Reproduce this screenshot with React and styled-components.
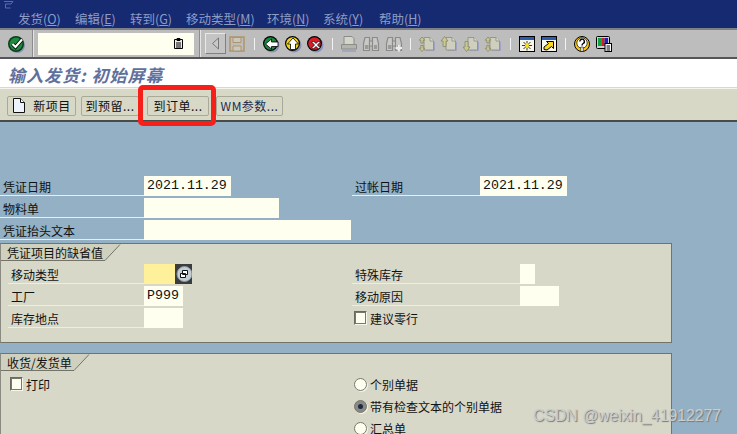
import React from 'react';
import styled, { createGlobalStyle } from 'styled-components';

const Global = createGlobalStyle`
  html, body { margin: 0; padding: 0; background: #94b0c4; }
`;

const cjk = `"Noto Sans CJK SC", "Liberation Sans", sans-serif`;

const Page = styled.div`
  position: relative;
  width: 737px;
  height: 434px;
  overflow: hidden;
  background: #94b0c4;
  font-family: ${cjk};
  font-size: 12px;
  color: #111;
`;

const TitleBar = styled.div`
  height: 28px;
  box-sizing: border-box;
  background: #162a72;
  display: flex;
  flex-direction: column;
  justify-content: space-between;
  padding: 1px 0 0 3px;
`;

const Menu = styled.div`
  display: flex;
  padding-left: 15px;
  height: 19px;
  line-height: 19px;
  font-size: 12.5px;
`;

const MenuItem = styled.span`
  width: ${p => p.$w}px;
  color: #8d9cc4;
  white-space: nowrap;
  u { text-underline-offset: 1px; }
`;

const Toolbar = styled.div`
  height: 31px;
  box-sizing: border-box;
  background: #bdbdbd;
  border-top: 2px solid #7d7f86;
  border-bottom: 2px solid #55565a;
  display: flex;
  align-items: center;
  padding-left: 8px;
`;

const Tool = styled.span`
  display: inline-flex;
  width: 16px;
  height: 16px;
  margin-left: ${p => p.$ml || 0}px;
  flex: none;
  svg { overflow: visible; }
`;

const Sep = styled.span`
  width: 1px;
  height: 12px;
  background: #f2f2f2;
  flex: none;
  margin-left: ${p => p.$ml}px;
`;

const TallSep = styled.span`
  width: 1px;
  height: 27px;
  flex: none;
  background: #8c8c8c;
  border-right: 1px solid #e4e4e4;
  margin-left: ${p => p.$ml}px;
`;

const Command = styled.div`
  width: 156px;
  height: 22px;
  margin-left: 4px;
  flex: none;
  box-sizing: border-box;
  background: #fffff0;
  display: flex;
  align-items: center;
  justify-content: flex-end;
  padding-right: 11px;
`;

const BackBox = styled.span`
  display: inline-flex;
  align-items: center;
  justify-content: center;
  width: 21px;
  height: 21px;
  margin-left: 4px;
  flex: none;
  background: #c4c4c4;
  border: 1px solid;
  box-sizing: border-box;
  border-color: #e8e8e8 #808080 #808080 #e8e8e8;
`;

const TitleRow = styled.div`
  height: 29px;
  box-sizing: border-box;
  background: #fff;
  border-bottom: 1px solid #d8d8d0;
  padding-left: 8px;
  line-height: 32px;
  font-size: 17px;
  font-weight: 700;
  font-style: italic;
  letter-spacing: 1px;
  color: #60709c;
`;

const AppBar = styled.div`
  height: 34px;
  box-sizing: border-box;
  background: #d8d8c6;
  border-top: 1px solid #f4f4ec;
  border-bottom: 2px solid #4a4a48;
  display: flex;
  padding: 7px 0 0 7px;
`;

const Btn = styled.div`
  height: 20px;
  width: ${p => p.$w}px;
  margin-right: ${p => p.$mr}px;
  flex: none;
  box-sizing: border-box;
  border: 1px solid #a9a998;
  border-radius: 2px;
  display: flex;
  align-items: center;
  justify-content: center;
  gap: 7px;
  white-space: nowrap;
  color: ${p => p.$color || '#111'};
  line-height: 18px;
  letter-spacing: 0.5px;
`;

const Body = styled.div`
  padding-top: 54px;
`;

const Columns = styled.div`
  display: flex;
`;

const Col = styled.div`
  width: ${p => p.$w}px;
  flex: none;
  box-sizing: border-box;
  display: flex;
  flex-direction: column;
  gap: 2px;
  padding-left: ${p => p.$pl || 0}px;
`;

const Row = styled.div`
  display: flex;
  height: 20px;
`;

const Label = styled.div`
  width: ${p => p.$w}px;
  flex: none;
  box-sizing: border-box;
  height: 20px;
  border-bottom: 1px solid #e8efe8;
  padding-left: ${p => p.$pl}px;
  line-height: 22px;
  white-space: nowrap;
`;

const Field = styled.div`
  width: ${p => p.$w}px;
  height: 20px;
  flex: none;
  box-sizing: border-box;
  background: ${p => p.$bg || '#fffff0'};
  font-family: "Liberation Mono", "DejaVu Sans Mono", monospace;
  font-size: 13.3px;
  line-height: 19px;
  padding-left: 3px;
  white-space: nowrap;
`;

const F4 = styled.span`
  width: 17px;
  height: 20px;
  flex: none;
  display: inline-flex;
`;

const Group = styled.section`
  width: 672px;
  box-sizing: border-box;
  height: ${p => p.$h}px;
  margin-top: ${p => p.$mt}px;
  background: #d8d8c8;
  border: 1px solid #73736a;
  border-left-color: #8a8a80;
`;

const TabWrap = styled.div`
  position: relative;
  height: 16px;
  width: ${p => p.$w}px;
  svg { position: absolute; left: 0; top: 0; }
`;

const TabText = styled.span`
  position: relative;
  padding-left: ${p => p.$pl}px;
  line-height: 18px;
  white-space: nowrap;
  display: block;
`;

const GroupCols = styled.div`
  display: flex;
  padding-top: ${p => p.$pt}px;
`;

const CheckLine = styled.div`
  display: flex;
  align-items: center;
  height: 20px;
  padding-left: ${p => p.$pl || 0}px;
  gap: 3px;
  white-space: nowrap;
`;

const CheckBox = styled.span`
  width: 13px;
  height: 14px;
  flex: none;
  box-sizing: border-box;
  background: #fffff0;
  border: 1px solid;
  border-color: #6a6a62 #f6f6ea #f6f6ea #6a6a62;
  outline: 1px solid #77776c;
  outline-offset: -2px;
`;

const Radio = styled.span`
  width: 13px;
  height: 13px;
  flex: none;
  box-sizing: border-box;
  border-radius: 50%;
  background: ${p => (p.$on ? '#8a8a84' : '#fffff0')};
  border: 1px solid #77776c;
  box-shadow: 1px 1px 0 #f4f4ea;
  display: flex;
  align-items: center;
  justify-content: center;
  &::after {
    content: '';
    display: ${p => (p.$on ? 'block' : 'none')};
    width: 5px;
    height: 5px;
    border-radius: 50%;
    background: #1d2c44;
  }
`;

const Highlight = styled.div`
  position: absolute;
  left: 138px;
  top: 85px;
  width: 78px;
  height: 41px;
  box-sizing: border-box;
  border: 5px solid #f5201a;
  border-radius: 5px;
`;

const Watermark = styled.div`
  position: absolute;
  left: 533px;
  top: 406px;
  font-family: "Liberation Sans", sans-serif;
  font-size: 15.8px;
  line-height: 20px;
  color: #c9cdcc;
  text-shadow: 1px 1px 1px #777;
  white-space: nowrap;
`;

/* toolbar drawings */
const Ball = ({ fill, glyph, ml }) => (
  <Tool $ml={ml}>
    <svg width="16" height="16" viewBox="0 0 16 16">
      <circle cx="9" cy="9" r="7.5" fill="#8a90b4" />
      <circle cx="7.5" cy="7.5" r="7.5" fill="#000" />
      <circle cx="7.5" cy="7.5" r="6.300" fill={fill} />
      <path d={glyph} fill="#fff" stroke="#000" strokeWidth=".8" />
    </svg>
  </Tool>
);

const CheckIcon = () => (
  <Tool>
    <svg width="16" height="16" viewBox="0 0 16 16">
      <circle cx="9.500" cy="9.500" r="7.500" fill="#8a90b4" />
      <circle cx="8" cy="8" r="8" fill="#0b3c1c" />
      <circle cx="8" cy="8" r="6.500" fill="#1e8a3c" />
      <path d="M4.500 8l3 3 6.500-7.500" fill="none" stroke="#000" strokeWidth="3.600" />
      <path d="M4.500 8l3 3 6.500-7.500" fill="none" stroke="#fff" strokeWidth="2.200" />
    </svg>
  </Tool>
);

const PageIcon = ({ ml, glyph }) => (
  <Tool $ml={ml}>
    <svg width="16" height="16" viewBox="0 0 16 16">
      <path d="M7 14.500h8.500V6" fill="none" stroke="#9ea2c4" />
      <path d="M5 1.500h6l3.500 3.500v9H5z" fill="#cfcfbe" stroke="#96968a" />
      <path d="M11 1.500V5h3.500" fill="#e0e0d4" stroke="#96968a" />
      <path d={glyph} fill="#c9c98e" stroke="#88886c" strokeWidth=".8" />
    </svg>
  </Tool>
);

const Print = ({ ml }) => (
  <Tool $ml={ml}>
    <svg width="16" height="16" viewBox="0 0 16 16">
      <path d="M3 .5h8l2 2V9H3z" fill="#d4d4c8" stroke="#8c8c8c" />
      <path d="M.5 8.500h15V13H.5z" fill="#b4b4a8" stroke="#8c8c8c" />
      <path d="M1 15h14" stroke="#9aa0c0" strokeWidth="1.500" />
    </svg>
  </Tool>
);

const Binocular = ({ ml, plus }) => (
  <Tool $ml={ml}>
    <svg width="16" height="16" viewBox="0 0 16 16">
      <path d="M.5 7.500L2 1.500h4.500v13h-6zM9.500 1.500H14l1.500 6v7h-6zM6.500 5h3v5h-3z" fill="#c8c8c4" stroke="#8a8a8a" strokeWidth="1.200" />
      <path d="M2 9h3.500v4H2zM11 9h3v4h-3z" fill="#9a9a96" />
      {plus && <path d="M9.500 12h6.500M12.800 9v6.500" stroke="#ececec" strokeWidth="2.200" />}
    </svg>
  </Tool>
);

const WindowIcon = ({ ml, arrow }) => (
  <Tool $ml={ml}>
    <svg width="16" height="16" viewBox="0 0 16 16">
      <rect x=".5" y=".5" width="15" height="15" fill="#f6f6ee" stroke="#000" />
      <rect x="1" y="1" width="14" height="3" fill="#2c5cb0" />
      {arrow ? (
        <path d="M3 13.500V11l4.500-3.500-2-2h7v7l-2-2L6 14z" fill="#f8d820" stroke="#000" />
      ) : (
        <>
          <path d="M8 5v9.500M3 9.500h10M4.500 6l7 7M11.500 6l-7 7" stroke="#403c00" strokeWidth="1" />
          <path d="M6 9.500h4M8 7v5" stroke="#f8e010" strokeWidth="2" />
        </>
      )}
    </svg>
  </Tool>
);

const Help = ({ ml }) => (
  <Tool $ml={ml}>
    <svg width="16" height="16" viewBox="0 0 16 16">
      <circle cx="8" cy="8" r="7.500" fill="#f8c810" stroke="#000" />
      <circle cx="8" cy="7" r="5.200" fill="#fff" stroke="#000" strokeWidth=".7" />
      <path d="M5.800 5.500a2.300 2.300 0 1 1 3.400 2c-.9.5-1.200 1-1.200 2" fill="none" stroke="#000" strokeWidth="1.400" />
      <path d="M6.800 11h2.400v4.500H6.800z" fill="#fff" stroke="#000" strokeWidth=".6" />
    </svg>
  </Tool>
);

const Monitor = ({ ml }) => (
  <Tool $ml={ml}>
    <svg width="16" height="16" viewBox="0 0 16 16">
      <rect x=".5" y=".5" width="13" height="12" rx="1" fill="#d0d0d0" stroke="#000" />
      <rect x="2" y="2" width="3.300" height="8" fill="#10a040" />
      <rect x="5.300" y="2" width="3.300" height="8" fill="#d02020" />
      <rect x="8.600" y="2" width="3.400" height="8" fill="#2020c0" />
      <rect x="9" y="7.500" width="6.500" height="8" fill="#fff" stroke="#000" />
      <path d="M10.500 10h3.500M10.500 12h3.500M10.500 14h3.500" stroke="#000" />
    </svg>
  </Tool>
);

const glyphs = {
  left: 'M2.500 8L8.500 3v3H15v4.500H8.500V13z',
  up: 'M8 2l5.500 6H10.500v5.500h-5V8H2.500z',
  cross: 'M5 6.500L6.500 5 9 7.500 11.500 5 13 6.500 10.500 9 13 11.500 11.500 13 9 10.500 6.500 13 5 11.500 7.500 9z',
  both: 'M3 1l2.800 3.200H4.200V7H1.800V4.200H.2zM3 15.500l2.800-3.200H4.200V9.500H1.800v2.800H.2z',
  one: 'M3.500 .5L7 5H5v5.500H2V5H0z',
  down: 'M3.500 15.500L7 11H5V5.500H2V11H0z',
};

const group1Left = [
  { label: '移动类型', w: 31, bg: '#fff09c', f4: true },
  { label: '工厂', w: 39, value: 'P999' },
  { label: '库存地点', w: 39 },
];

function GroupTitle({ w, text }) {
  return (
    <TabWrap $w={w}>
      <svg width={w + 1} height="17" viewBox={`0 0 ${w + 1} 17`}>
        <path d={`M0 0H${w}L${w - 15} 16H0z`} fill="#d0d0be" />
        <path d={`M0 16.500H${w - 15}L${w} .5`} fill="none" stroke="#73736a" />
      </svg>
      <TabText $pl={6}>{text}</TabText>
    </TabWrap>
  );
}

export default function App() {
  return (
    <Page>
      <Global />
      <TitleBar>
        <svg width="11" height="8" viewBox="0 0 11 8">
          <path d="M1 .5h9L8 3H2.500v4h5" fill="none" stroke="#5a6ca8" />
        </svg>
        <Menu>
          <MenuItem $w={57}>发货(<u>O</u>)</MenuItem>
          <MenuItem $w={55}>编辑(<u>E</u>)</MenuItem>
          <MenuItem $w={56}>转到(<u>G</u>)</MenuItem>
          <MenuItem $w={81}>移动类型(<u>M</u>)</MenuItem>
          <MenuItem $w={56}>环境(<u>N</u>)</MenuItem>
          <MenuItem $w={56}>系统(<u>Y</u>)</MenuItem>
          <MenuItem $w={56}>帮助(<u>H</u>)</MenuItem>
        </Menu>
      </TitleBar>

      <Toolbar>
        <CheckIcon />
        <TallSep $ml={8} />
        <Command>
          <svg width="9" height="11" viewBox="0 0 9 11">
            <path d="M.5 1.500h8v9h-8z" fill="#eee" stroke="#000" />
            <path d="M3 .5h3v2H3zM2 5h5M2 7h5M2 9h5" fill="#000" stroke="#000" />
          </svg>
        </Command>
        <TallSep $ml={5} />
        <BackBox>
          <svg width="9" height="13" viewBox="0 0 9 13">
            <path d="M7.500 1L1.500 6.500 7.500 12z" fill="#c8c8c8" stroke="#777" />
          </svg>
        </BackBox>
        <Tool $ml={3}>
          <svg width="16" height="16" viewBox="0 0 16 16">
            <path d="M1 1h14v14H1z" fill="#bdbdbd" stroke="#b09468" strokeWidth="1.500" />
            <path d="M4 1.500h8v5H4zM4 10h8v5H4z" fill="#c8c8c0" stroke="#b09468" />
          </svg>
        </Tool>
        <Sep $ml={9} />
        <Ball ml={8} fill="#168a3c" glyph={glyphs.left} />
        <Ball ml={6} fill="#f4d410" glyph={glyphs.up} />
        <Ball ml={6} fill="#d81c28" glyph={glyphs.cross} />
        <Sep $ml={9} />
        <Print ml={8} />
        <Binocular ml={6} />
        <Binocular ml={7} plus />
        <Sep $ml={8} />
        <PageIcon ml={8} glyph={glyphs.both} />
        <PageIcon ml={6} glyph={glyphs.one} />
        <PageIcon ml={6} glyph={glyphs.down} />
        <PageIcon ml={6} glyph={glyphs.both} />
        <Sep $ml={9} />
        <WindowIcon ml={8} />
        <WindowIcon ml={6} arrow />
        <Sep $ml={8} />
        <Help ml={8} />
        <Monitor ml={6} />
      </Toolbar>

      <TitleRow>输入发货: 初始屏幕</TitleRow>

      <AppBar>
        <Btn $w={69} $mr={5}>
          <svg width="14" height="16" viewBox="0 0 14 16">
            <path d="M1.500.5h7l4 4v10h-11z" fill="#eef4fc" stroke="#111" />
            <path d="M8.500.5v4h4" fill="#fff" stroke="#111" />
          </svg>
          新项目
        </Btn>
        <Btn $w={58} $mr={8}>到预留...</Btn>
        <Btn $w={62} $mr={7}>到订单...</Btn>
        <Btn $w={67} $mr={0} $color="#1c2c50">WM参数...</Btn>
      </AppBar>

      <Body>
        <Columns>
          <Col $w={352}>
            <Row>
              <Label $w={144} $pl={3}>凭证日期</Label>
              <Field $w={87}>2021.11.29</Field>
            </Row>
            <Row>
              <Label $w={144} $pl={3}>物料单</Label>
              <Field $w={135} />
            </Row>
            <Row>
              <Label $w={144} $pl={3}>凭证抬头文本</Label>
              <Field $w={207} />
            </Row>
          </Col>
          <Col $w={227}>
            <Row>
              <Label $w={128} $pl={3}>过帐日期</Label>
              <Field $w={87}>2021.11.29</Field>
            </Row>
          </Col>
        </Columns>

        <Group $h={100} $mt={3}>
          <GroupTitle w={119} text="凭证项目的缺省值" />
          <GroupCols $pt={4}>
            <Col $w={351} $pl={7}>
              {group1Left.map(f => (
                <Row key={f.label}>
                  <Label $w={136} $pl={3}>{f.label}</Label>
                  <Field $w={f.w} $bg={f.bg}>{f.value}</Field>
                  {f.f4 && (
                    <F4>
                      <svg width="17" height="20" viewBox="0 0 17 20">
                        <rect width="17" height="20" fill="#3c3c3c" />
                        <circle cx="9.500" cy="10" r="7.500" fill="#c4cdd0" stroke="#7f9ab0" />
                        <path d="M7.500 6.500h5v4h-5zM5.500 9.500h5v4h-5z" fill="#fff" stroke="#111" />
                      </svg>
                    </F4>
                  )}
                </Row>
              ))}
            </Col>
            <Col $w={215}>
              <Row>
                <Label $w={168} $pl={3}>特殊库存</Label>
                <Field $w={15} />
              </Row>
              <Row>
                <Label $w={168} $pl={3}>移动原因</Label>
                <Field $w={39} />
              </Row>
              <CheckLine $pl={2}>
                <CheckBox />
                建议零行
              </CheckLine>
            </Col>
          </GroupCols>
        </Group>

        <Group $h={120} $mt={10}>
          <GroupTitle w={88} text="收货/发货单" />
          <GroupCols $pt={4}>
            <Col $w={351}>
              <CheckLine $pl={9}>
                <CheckBox />
                打印
              </CheckLine>
            </Col>
            <Col $w={215} $pl={2}>
              <CheckLine><Radio />个别单据</CheckLine>
              <CheckLine><Radio $on />带有检查文本的个别单据</CheckLine>
              <CheckLine><Radio />汇总单</CheckLine>
            </Col>
          </GroupCols>
        </Group>
      </Body>

      <Highlight />
      <Watermark>CSDN @weixin_41912277</Watermark>
    </Page>
  );
}
